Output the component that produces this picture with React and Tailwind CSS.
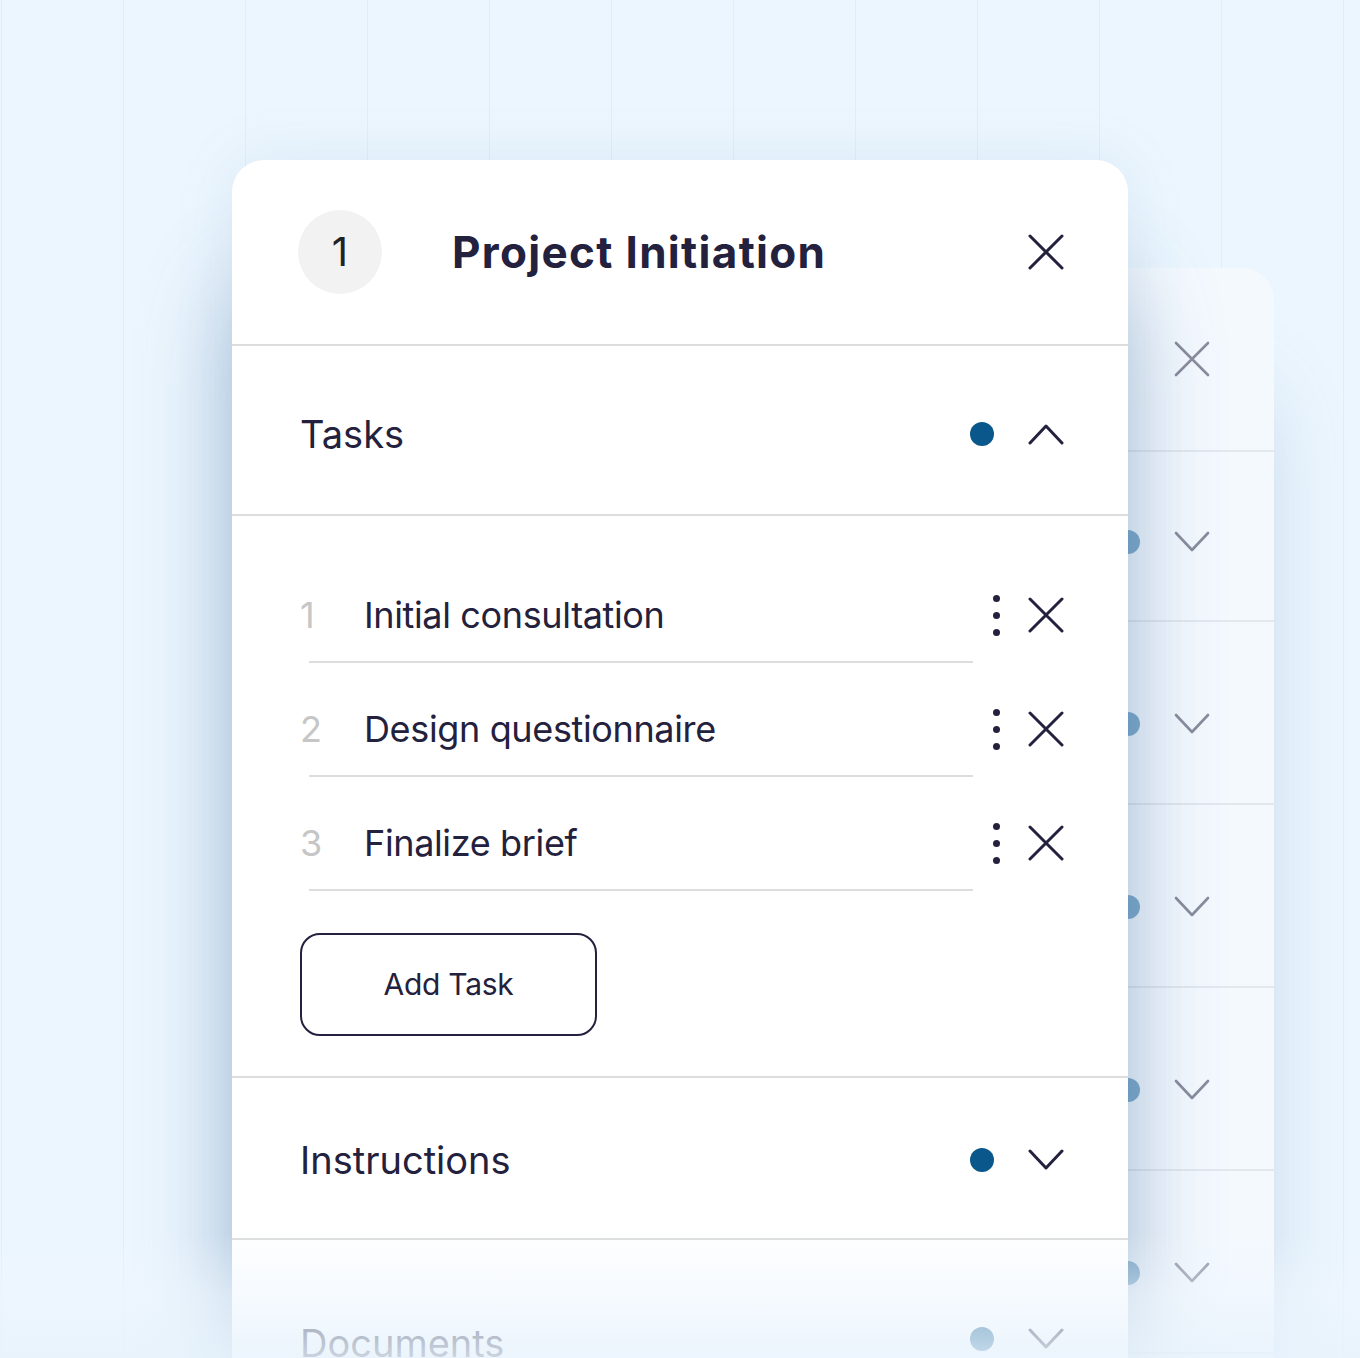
import React from "react";

const INK = "#23213d";

function XIcon({ color = INK, w = 3 }) {
  return (
    <svg width="36" height="36" viewBox="0 0 36 36" fill="none">
      <path d="M2 2L34 34M34 2L2 34" stroke={color} strokeWidth={w} strokeLinecap="round" />
    </svg>
  );
}

function Chevron({ up = false, color = INK, w = 3 }) {
  return (
    <svg width="36" height="24" viewBox="0 0 36 24" fill="none">
      <path
        d={up ? "M2 21L18 4L34 21" : "M2 3L18 20L34 3"}
        stroke={color}
        strokeWidth={w}
        strokeLinecap="round"
        strokeLinejoin="round"
      />
    </svg>
  );
}

function Kebab() {
  return (
    <div className="flex flex-col items-center gap-[10px] w-[8px]">
      <span className="block w-[7px] h-[7px] rounded-full bg-[#23213d]" />
      <span className="block w-[7px] h-[7px] rounded-full bg-[#23213d]" />
      <span className="block w-[7px] h-[7px] rounded-full bg-[#23213d]" />
    </div>
  );
}

function TaskRow({ n, label }) {
  return (
    <div>
      <div className="flex items-start h-[112px] pt-[46px] pl-[68px] pr-[64px]">
        <span className="w-[64px] text-[36px] leading-[40px] text-[#c6c6c6]">{n}</span>
        <span className="flex-1 text-[36px] leading-[40px] text-[#23213d] tracking-[-0.01em]">{label}</span>
        <div className="flex items-center h-[40px]">
          <Kebab />
          <div className="ml-[28px]">
            <XIcon />
          </div>
        </div>
      </div>
      <div className="ml-[77px] w-[664px] h-[2px] bg-[#dddddd]" />
    </div>
  );
}

function BackRow({ first }) {
  return (
    <div
      className={
        "flex items-center justify-end pr-[64px] border-b-2 border-[#e2e8ee] " +
        (first ? "h-[170px] pt-[12px]" : "h-[183px] pt-[22px]")
      }
    >
      <span className="block w-[24px] h-[24px] rounded-full bg-[#80abc9]" />
      <div className="ml-[34px]">
        <Chevron color="#8a8c9c" w={2.6} />
      </div>
    </div>
  );
}

export default function App() {
  return (
    <div
      className="relative w-[1360px] h-[1358px] overflow-hidden bg-[#ecf6fe]"
      style={{ fontFamily: "Inter, 'Noto Sans', sans-serif" }}
    >
      {/* grid lines */}
      <div className="absolute inset-0 flex pl-[1px]">
        {Array.from({ length: 12 }).map((_, i) => (
          <div key={i} className="w-[122px] shrink-0 h-full border-l border-[#e0eefa]" />
        ))}
      </div>

      {/* back card */}
      <div className="absolute left-[378px] top-[268px] w-[896px] h-[1200px] rounded-[32px] bg-[#f4f9fe] shadow-[0_110px_90px_-20px_rgba(70,120,170,0.30)]">
        <div className="h-[184px] flex items-center justify-end pr-[64px] border-b-2 border-[#e2e8ee]">
          <XIcon color="#8a8c9c" w={2.6} />
        </div>
        <BackRow first />
        <BackRow />
        <BackRow />
        <BackRow />
        <BackRow />
      </div>

      {/* main card */}
      <div className="relative z-10 pt-[160px] pl-[232px]">
        <div className="w-[896px] h-[1300px] rounded-[32px] bg-white shadow-[0_0_60px_rgba(80,130,180,0.12),0_120px_100px_-10px_rgba(50,100,150,0.45)] overflow-hidden">
          {/* header */}
          <div className="h-[186px] flex items-center pl-[66px] pr-[64px] border-b-2 border-[#dddddd]">
            <div className="w-[84px] h-[84px] rounded-full bg-[#f2f2f2] flex items-center justify-center text-[40px] text-[#222222]">
              1
            </div>
            <div className="ml-[70px] flex-1 text-[44px] font-bold text-[#23213d] tracking-[0.03em]">
              Project Initiation
            </div>
            <XIcon />
          </div>

          {/* tasks header */}
          <div className="h-[170px] flex items-center pl-[68px] pr-[64px] pt-[8px] border-b-2 border-[#dddddd]">
            <span className="flex-1 text-[38px] text-[#23213d]">Tasks</span>
            <span className="block w-[24px] h-[24px] rounded-full bg-[#0a578b]" />
            <div className="ml-[34px]">
              <Chevron up />
            </div>
          </div>

          {/* tasks list */}
          <div className="pt-[33px]">
            <TaskRow n="1" label="Initial consultation" />
            <TaskRow n="2" label="Design questionnaire" />
            <TaskRow n="3" label="Finalize brief" />
          </div>

          <div className="pl-[68px] pt-[42px] pb-[40px] border-b-2 border-[#dddddd]">
            <button className="w-[297px] h-[103px] rounded-[20px] border-2 border-[#23213d] text-[30px] text-[#23213d] tracking-[-0.01em]">
              Add Task
            </button>
          </div>

          {/* instructions */}
          <div className="h-[162px] flex items-center pl-[68px] pr-[64px] pt-[4px] border-b-2 border-[#dddddd]">
            <span className="flex-1 text-[38px] text-[#23213d]">Instructions</span>
            <span className="block w-[24px] h-[24px] rounded-full bg-[#0a578b]" />
            <div className="ml-[34px]">
              <Chevron />
            </div>
          </div>

          {/* documents */}
          <div className="h-[200px] flex items-start pt-[75px] pl-[68px] pr-[64px]">
            <span className="flex-1 text-[38px] text-[#23213d]">Documents</span>
            <div className="flex items-center h-[48px]">
              <span className="block w-[24px] h-[24px] rounded-full bg-[#0a578b]" />
              <div className="ml-[34px]">
                <Chevron />
              </div>
            </div>
          </div>
        </div>
      </div>

      {/* bottom fade */}
      <div className="absolute left-0 right-0 bottom-0 h-[125px] z-20 bg-gradient-to-b from-[#eef6fe]/0 via-[#eef6fe]/55 to-[#e8f3fc]/85" />
    </div>
  );
}
